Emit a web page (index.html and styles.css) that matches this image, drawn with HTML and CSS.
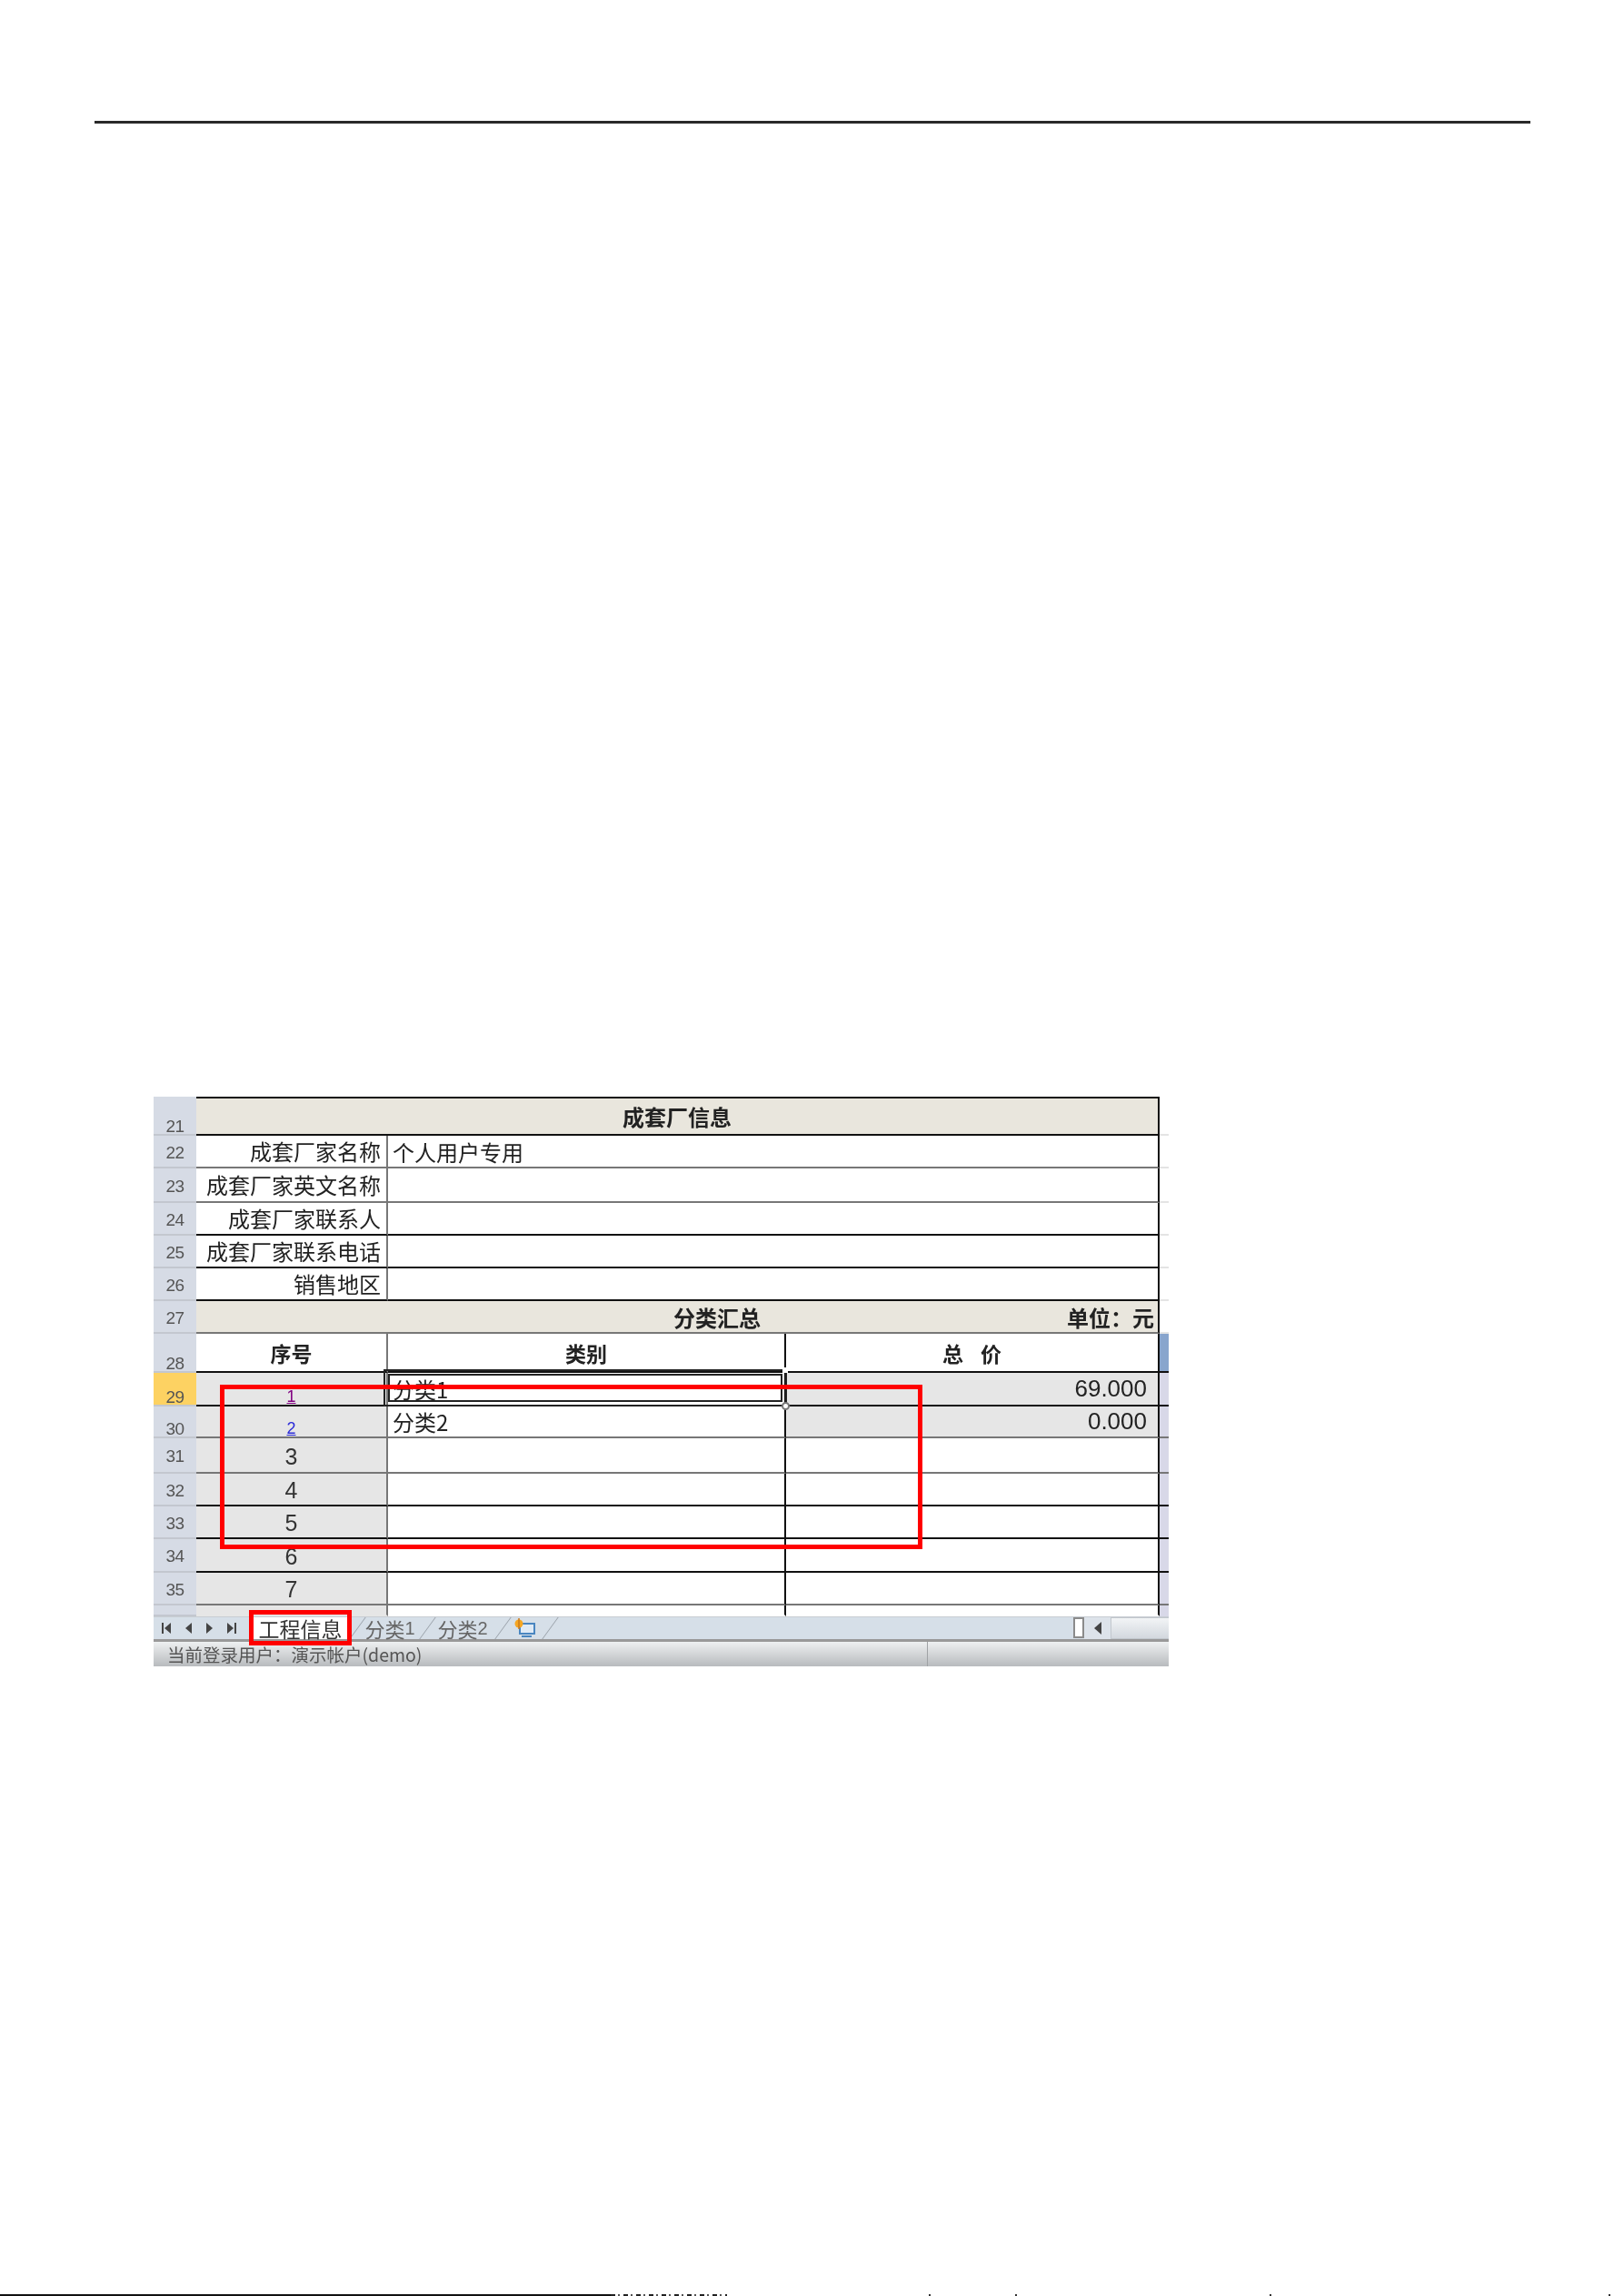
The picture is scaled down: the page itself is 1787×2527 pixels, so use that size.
FILE: index.html
```html
<!DOCTYPE html>
<html lang="zh-CN">
<head>
    <meta charset="UTF-8">
    <title>成套厂信息</title>
    <link rel="stylesheet" href="styles.css">
</head>
<body>
    <div class="page">
        <div class="top-rule"></div>

        <div class="sheet">
            <div class="sheet-body">
                <div class="row h43 line-black">
                    <div class="num low">21</div>
                    <div class="cell section first span3">成套厂信息</div>
                    <div class="margin"></div>
                </div>
                <div class="row h36 line-gray">
                    <div class="num">22</div>
                    <div class="cell label">成套厂家名称</div>
                    <div class="cell value span2">个人用户专用</div>
                    <div class="margin"></div>
                </div>
                <div class="row h38 line-gray">
                    <div class="num">23</div>
                    <div class="cell label">成套厂家英文名称</div>
                    <div class="cell value span2"></div>
                    <div class="margin"></div>
                </div>
                <div class="row h36 line-black">
                    <div class="num">24</div>
                    <div class="cell label">成套厂家联系人</div>
                    <div class="cell value span2"></div>
                    <div class="margin"></div>
                </div>
                <div class="row h36 line-black">
                    <div class="num">25</div>
                    <div class="cell label">成套厂家联系电话</div>
                    <div class="cell value span2"></div>
                    <div class="margin"></div>
                </div>
                <div class="row h36 line-black">
                    <div class="num">26</div>
                    <div class="cell label">销售地区</div>
                    <div class="cell value span2"></div>
                    <div class="margin"></div>
                </div>
                <div class="row h36 line-gray">
                    <div class="num">27</div>
                    <div class="cell section span3 summary">
                        <span class="summary-title">分类汇总</span>
                        <span class="unit">单位：元</span>
                    </div>
                    <div class="margin"></div>
                </div>
                <div class="row h43 line-black">
                    <div class="num low">28</div>
                    <div class="cell head">序号</div>
                    <div class="cell head black-side">类别</div>
                    <div class="cell head black-side wide-gap">总 价</div>
                    <div class="margin blue"></div>
                </div>
                <div class="row h37 line-black">
                    <div class="num low active">29</div>
                    <div class="cell index grey"><a class="link visited">1</a></div>
                    <div class="cell value black-side selected">分类1<i class="handle top"></i><i class="handle bottom"></i></div>
                    <div class="cell price grey black-side">69.000</div>
                    <div class="margin lilac"></div>
                </div>
                <div class="row h35 line-gray">
                    <div class="num low">30</div>
                    <div class="cell index grey"><a class="link">2</a></div>
                    <div class="cell value black-side">分类2</div>
                    <div class="cell price grey black-side">0.000</div>
                    <div class="margin lilac"></div>
                </div>
                <div class="row h39 line-gray">
                    <div class="num">31</div>
                    <div class="cell index grey">3</div>
                    <div class="cell value black-side"></div>
                    <div class="cell price black-side"></div>
                    <div class="margin lilac"></div>
                </div>
                <div class="row h36 line-black">
                    <div class="num">32</div>
                    <div class="cell index grey">4</div>
                    <div class="cell value black-side"></div>
                    <div class="cell price black-side"></div>
                    <div class="margin lilac"></div>
                </div>
                <div class="row h36 line-black">
                    <div class="num">33</div>
                    <div class="cell index grey">5</div>
                    <div class="cell value black-side"></div>
                    <div class="cell price black-side"></div>
                    <div class="margin lilac"></div>
                </div>
                <div class="row h37 line-black">
                    <div class="num">34</div>
                    <div class="cell index grey">6</div>
                    <div class="cell value black-side"></div>
                    <div class="cell price black-side"></div>
                    <div class="margin lilac"></div>
                </div>
                <div class="row h36 line-gray">
                    <div class="num">35</div>
                    <div class="cell index grey">7</div>
                    <div class="cell value black-side"></div>
                    <div class="cell price black-side"></div>
                    <div class="margin lilac"></div>
                </div>
                <div class="row h12 clipped">
                    <div class="num">36</div>
                    <div class="cell index grey">8</div>
                    <div class="cell value black-side"></div>
                    <div class="cell price black-side"></div>
                    <div class="margin lilac"></div>
                </div>

                <div class="tabbar">
                    <div class="tab-nav">
                        <svg width="10" height="12" viewBox="0 0 10 12"><path d="M0 0h2v12H0zM10 0v12L3 6z"/></svg>
                        <svg width="7" height="12" viewBox="0 0 7 12"><path d="M7 0v12L0 6z"/></svg>
                        <svg width="7" height="12" viewBox="0 0 7 12"><path d="M0 0v12l7-6z"/></svg>
                        <svg width="10" height="12" viewBox="0 0 10 12"><path d="M8 0h2v12H8zM0 0v12l7-6z"/></svg>
                    </div>
                    <div class="tab current">工程信息</div>
                    <i class="slash first-slash"></i>
                    <div class="tab tab-one">分类<span class="tab-no">1</span></div>
                    <i class="slash"></i>
                    <div class="tab tab-two">分类<span class="tab-no">2</span></div>
                    <i class="slash"></i>
                    <div class="tab tab-icon">
                        <svg width="25" height="22" viewBox="0 0 25 22">
                            <rect x="7" y="6" width="16" height="11" fill="#dfeaf5" stroke="#4a86c0" stroke-width="2"/>
                            <path d="M9 20h11" stroke="#4a86c0" stroke-width="2"/>
                            <circle cx="6" cy="6" r="4.5" fill="#f5a623"/>
                            <path d="M6 0v12" stroke="#c9791a" stroke-width="1.5"/>
                        </svg>
                    </div>
                    <i class="slash"></i>
                    <div class="hscroll">
                        <div class="split-box"></div>
                        <div class="scroll-btn"><svg width="8" height="14" viewBox="0 0 8 14"><path d="M8 0v14L0 7z" fill="#444"/></svg></div>
                        <div class="scroll-thumb"></div>
                    </div>
                </div>
                <div class="statusbar">
                    <div class="status-left">当前登录用户：演示帐户(demo)</div>
                    <div class="status-right"></div>
                </div>
            </div>

            <div class="mark mark-range"></div>
            <div class="mark mark-tab"></div>
        </div>

        <div class="bottom-rule">
            <div class="rule-solid"></div>
            <div class="rule-bits"></div>
            <i class="speck s1"></i>
            <i class="speck s2"></i>
            <i class="speck s3"></i>
            <i class="speck s4"></i>
        </div>
    </div>
</body>
</html>
```

FILE: styles.css
```css
* {
    box-sizing: border-box;
}
body {
    margin: 0;
    background: #fff;
    font-family: "Liberation Sans", "Noto Sans CJK SC", sans-serif;
    color: #222;
}
.page {
    height: 2527px;
    display: flex;
    flex-direction: column;
    overflow: hidden;
}
.top-rule {
    height: 3px;
    margin: 133px 103px 0 104px;
    background: #2a2a2a;
}
.sheet {
    position: relative;
    width: 1117px;
    margin: 1071px 0 0 169px;
}
.sheet-body {
    filter: blur(0.55px);
}

/* rows */
.row {
    display: grid;
    grid-template-columns: 47px 211px 438px 411px 10px;
    --line: #111;
}
.line-gray {
    --line: #777;
}
.h12 { height: 12px; }
.h35 { height: 35px; }
.h36 { height: 36px; }
.h37 { height: 37px; }
.h38 { height: 38px; }
.h39 { height: 39px; }
.h43 { height: 43px; }
.clipped {
    overflow: hidden;
    --line: transparent;
}
.clipped .index {
    align-items: flex-start;
    padding-top: 6px;
}
.clipped .num {
    align-items: flex-start;
    padding-top: 8px;
}

.num {
    display: flex;
    align-items: center;
    justify-content: center;
    padding-top: 3px;
    font-size: 19px;
    letter-spacing: -0.5px;
    color: #555;
    background: #d6dbe5;
    border-bottom: 2px solid #c3c7cf;
    overflow: hidden;
}
.num.low {
    align-items: flex-end;
    line-height: 16px;
}
.num.active {
    background: #fdd262;
}

.cell {
    display: flex;
    align-items: center;
    min-width: 0;
    font-family: "Noto Sans CJK SC", "Liberation Sans", sans-serif;
    font-size: 24px;
    border-bottom: 2px solid var(--line);
    border-right: 2px solid #777;
    overflow: hidden;
}
.span2 { grid-column: span 2; }
.span3 { grid-column: span 3; }
.black-side,
.span2,
.span3 {
    border-right: 2px solid #111;
}
.section {
    justify-content: center;
    font-weight: 700;
    background: #e9e6dd;
}
.section.first {
    border-top: 2px solid #111;
}
.summary {
    display: grid;
    grid-template-columns: 208px 730px 120px;
    justify-content: stretch;
}
.summary-title {
    grid-column: 2;
    text-align: center;
}
.unit {
    grid-column: 3;
    text-align: right;
    padding-right: 4px;
    white-space: nowrap;
}
.label {
    justify-content: flex-end;
    padding: 0 6px 1px 0;
    white-space: nowrap;
}
.value {
    padding-left: 5px;
}
.head {
    justify-content: center;
    font-weight: 700;
    font-size: 23px;
}
.wide-gap {
    word-spacing: 14px;
}
.grey {
    background: #e6e6e6;
}
.index {
    justify-content: center;
    padding-top: 3px;
    font-family: "Liberation Sans", sans-serif;
    font-size: 25px;
    color: #333;
}
.link {
    align-self: flex-end;
    font-size: 18px;
    line-height: 17px;
    color: #2a2ad8;
    text-decoration: underline;
}
.link.visited {
    color: #800080;
}
.price {
    justify-content: flex-end;
    padding-right: 12px;
    font-family: "Liberation Sans", sans-serif;
    font-size: 26px;
    color: #222;
}
.margin {
    background: #fff;
    border-bottom: 2px solid #e4e4e4;
}
.margin.blue {
    background: #88a5cd;
    border-bottom-color: var(--line);
}
.margin.lilac {
    background: #d8d8e8;
    border-bottom-color: var(--line);
}

/* selected cell frame */
.selected {
    position: relative;
    overflow: visible;
}
.selected::after {
    content: "";
    position: absolute;
    left: -5px;
    right: -3px;
    top: -4px;
    bottom: -2px;
    border: 7px double #222;
    pointer-events: none;
}
.handle {
    position: absolute;
    z-index: 1;
    right: -6px;
    width: 9px;
    height: 9px;
    background: #fff;
    border: 2px solid #777;
}
.handle.top {
    top: -6px;
    border: 0;
    height: 6px;
    width: 6px;
    right: -4px;
}
.handle.bottom {
    bottom: -6px;
    border-radius: 50%;
}

/* sheet tabs */
.tabbar {
    display: flex;
    align-items: stretch;
    height: 28px;
    background: #d6dfe8;
    border-bottom: 3px solid #999;
    border-top: 1px solid #c8cdd3;
    font-family: "Noto Sans CJK SC", "Liberation Sans", sans-serif;
    color: #666;
}
.tab-nav {
    display: flex;
    align-items: center;
    gap: 16px;
    width: 105px;
    padding-left: 9px;
}
.tab-nav svg {
    fill: #444;
}
.tab {
    display: flex;
    align-items: center;
    justify-content: center;
    font-size: 22px;
    line-height: 1;
}
.tab.current {
    width: 113px;
    background: #fff;
    color: #333;
    font-size: 23px;
}
.tab-one {
    width: 76px;
    padding-right: 6px;
}
.tab-two {
    width: 82px;
    padding-right: 6px;
}
.tab-no {
    font-family: "Liberation Sans", sans-serif;
    font-size: 20px;
}
.tab-icon {
    width: 51px;
    padding-right: 4px;
}
.slash {
    flex: none;
    width: 1px;
    background: #99a0a8;
    transform: skewX(-36deg);
}
.first-slash {
    margin-left: 6px;
}
.hscroll {
    margin-left: auto;
    display: flex;
    align-items: stretch;
    width: 105px;
}
.split-box {
    width: 12px;
    background: #fff;
    border: 2px solid #8b8b8b;
    margin-bottom: 1px;
}
.scroll-btn {
    display: flex;
    align-items: center;
    justify-content: center;
    width: 29px;
    background: #dde3ea;
}
.scroll-thumb {
    flex: 1;
    background: linear-gradient(#f2f4f6, #d3d8de);
    border: 1px solid #c2c7cd;
    border-right: 0;
}

.statusbar {
    display: flex;
    height: 27px;
    background: linear-gradient(#eef0f1, #b8bbbe);
    font-family: "Noto Sans CJK SC", "Liberation Sans", sans-serif;
    font-size: 19.5px;
    line-height: 28px;
    color: #555;
}
.status-left {
    width: 852px;
    padding-left: 15px;
    border-right: 1px solid #9fa2a5;
    white-space: nowrap;
    overflow: hidden;
}
.status-right {
    flex: 1;
}

/* red annotations on top of the screenshot */
.mark {
    position: absolute;
    border: 5px solid #f00;
}
.mark-range {
    left: 73px;
    top: 317px;
    width: 773px;
    height: 181px;
}
.mark-tab {
    left: 105px;
    top: 565px;
    width: 113px;
    height: 39px;
}

/* cut-off line at the page foot */
.bottom-rule {
    position: relative;
    display: flex;
    height: 2px;
    margin-top: auto;
}
.rule-solid {
    width: 672px;
    background: #111;
}
.rule-bits {
    width: 128px;
    background: repeating-linear-gradient(90deg, #222 0 5px, #fff 5px 8px, #555 8px 10px, #fff 10px 14px);
}
.speck {
    position: absolute;
    top: 0;
    width: 2px;
    height: 2px;
    background: #333;
}
.s1 { left: 1022px; }
.s2 { left: 1117px; }
.s3 { left: 1397px; }
.s4 { left: 1770px; }
```
